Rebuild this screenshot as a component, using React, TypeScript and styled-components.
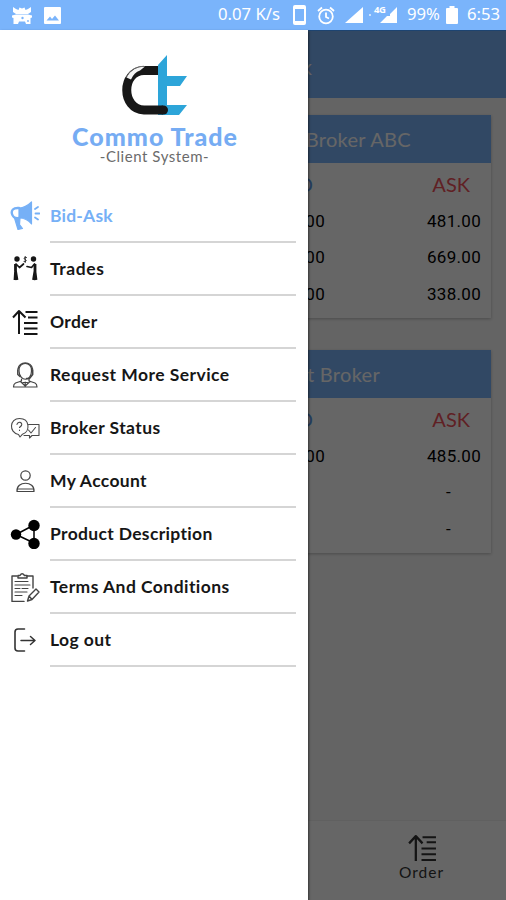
import React from 'react';
import styled, { createGlobalStyle } from 'styled-components';

const Global = createGlobalStyle`
  * { box-sizing: border-box; }
  html, body { margin: 0; height: 100%; }
  body { background: #fff; overflow: hidden; }
`;

const Screen = styled.div`
  position: relative;
  width: 506px;
  height: 900px;
  display: flex;
  flex-direction: column;
  overflow: hidden;
  background: #fafafa;
  font-family: Lato, 'Open Sans', sans-serif;
`;

const StatusBar = styled.header`
  height: 30px;
  flex: none;
  display: flex;
  align-items: center;
  padding: 0 6px 0 11px;
  background: #7ab4fb;
  color: #fff;
  font: 400 16.7px/28px 'Noto Sans', sans-serif;
  svg { display: block; flex: none; }
`;

const StatusText = styled.span<{ $left?: number }>`
  white-space: nowrap;
  margin-left: ${(p) => p.$left ?? 0}px;
  padding-bottom: 2px;
`;

const StatusIcon = styled.span<{ $left?: number }>`
  margin-left: ${(p) => p.$left ?? 0}px;
`;

const NetworkType = styled.span`
  width: 15px;
  margin: 0 -10px 10px 3px;
  font-size: 9.5px;
  font-weight: 700;
  line-height: 12px;
  letter-spacing: -0.3px;
`;

const Dot = styled.span`
  width: 2px;
  height: 2px;
  margin-left: 6px;
  background: rgba(255, 255, 255, 0.6);
`;

const Spacer = styled.span`
  flex: 1;
`;

const Body = styled.div`
  position: relative;
  flex: 1;
  display: flex;
  flex-direction: column;
`;

const AppBar = styled.div`
  height: 68px;
  flex: none;
  display: flex;
  align-items: center;
  padding-left: 240px;
  padding-top: 5px;
  background: #7ab4fb;
  color: #fff;
  font-size: 21px;
`;

const Cards = styled.main`
  flex: 1;
  display: flex;
  flex-direction: column;
  gap: 32px;
  padding: 17px 15px 0;
`;

const Card = styled.section`
  height: 203px;
  background: #fff;
  box-shadow: 0 1px 3px rgba(0, 0, 0, 0.25);
`;

const CardTitle = styled.h2<{ $right: number }>`
  margin: 0;
  height: 48px;
  padding-right: ${(p) => p.$right}px;
  letter-spacing: 0.3px;
  background: #7ab4fb;
  color: #fff;
  font-size: 20px;
  font-weight: 400;
  line-height: 48px;
  text-align: right;
`;

const Quotes = styled.div`
  display: grid;
  grid-template-columns: 310px 156px;
  grid-template-rows: 40px;
  grid-auto-rows: 36.3px;
  padding-right: 10px;
  justify-items: end;
  align-items: center;
  font: 400 17px Roboto, sans-serif;
  color: #000;
`;

const Side = styled.span<{ $color: string; $right: number }>`
  color: ${(p) => p.$color};
  font: 400 20px Lato, sans-serif;
  padding: 1px ${(p) => p.$right}px 0 0;
`;

const Price = styled.span<{ $empty?: boolean }>`
  padding-right: ${(p) => (p.$empty ? 30 : 0)}px;
  letter-spacing: 0.3px;
`;

const BottomNav = styled.nav`
  height: 80px;
  flex: none;
  display: flex;
  justify-content: flex-end;
  background: #fff;
  border-top: 1px solid #f0f0f0;
`;

const NavItem = styled.div`
  width: 169px;
  padding-top: 11px;
  display: flex;
  flex-direction: column;
  align-items: center;
  color: #333;
  font-size: 15.5px;
  letter-spacing: 1px;
  line-height: 18px;
  svg { display: block; }
`;

const Scrim = styled.div`
  position: absolute;
  inset: 0;
  background: rgba(0, 0, 0, 0.6);
  border-top: 1px solid #1d4471;
`;

const Drawer = styled.aside`
  position: absolute;
  inset: 0 auto 0 0;
  width: 308px;
  background: #fff;
  display: flex;
  flex-direction: column;
  box-shadow: 1px 1px 2px rgba(0, 0, 0, 0.5);
`;

const Brand = styled.div`
  height: 160px;
  padding: 24px 0 0 1px;
  display: flex;
  flex-direction: column;
  align-items: center;
  svg { display: block; margin-right: 1px; }
`;

const BrandName = styled.div`
  margin-top: 8px;
  padding-left: 1px;
  height: 25px;
  color: #76acf3;
  font-size: 25px;
  font-weight: 900;
  line-height: 25px;
  letter-spacing: 1px;
`;

const BrandSub = styled.div`
  color: #6b6b6b;
  font-size: 15px;
  line-height: 15px;
  letter-spacing: 0.55px;
`;

const MenuItem = styled.div<{ $active?: boolean }>`
  height: 53px;
  flex: none;
  display: flex;
  padding: 0 12px 0 10px;
  color: ${(p) => (p.$active ? '#76b0f6' : '#161616')};
`;

const MenuIcon = styled.span`
  width: 40px;
  display: flex;
  align-items: center;
  svg { display: block; margin-bottom: 1px; }
`;

const MenuLabel = styled.span<{ $tracking: number }>`
  flex: 1;
  border-bottom: 2px solid #d5d5d5;
  font-size: 17.5px;
  font-weight: 700;
  line-height: 51px;
  letter-spacing: ${(p) => p.$tracking}px;
  white-space: nowrap;
`;

const Ico = ({ children, w = 30 }: { children: React.ReactNode; w?: number }) => (
  <svg width={w} height={w} viewBox="0 0 30 30" fill="none" stroke="currentColor" strokeWidth="1.2" strokeLinecap="round" strokeLinejoin="round">
    {children}
  </svg>
);

const Megaphone = () => (
  <Ico>
    <path d="M9 7C14 7 17.500 5 21.500 1V23C18 18.500 14 17 9 17Z" fill="currentColor" />
    <path d="M9 7C3 6.500 1 9.500 2 13C3 16.500 6 17.500 9 17" strokeWidth="2.400" />
    <path d="M4.500 17L8 28.500L12.500 27.500L9.500 23.500L10 17Z" fill="currentColor" />
    <path d="M25 8L28 6M25.500 12.500H29.500M25 16.500L28 18.500" strokeWidth="1.800" />
  </Ico>
);

const Traders = () => (
  <Ico>
    <g fill="currentColor" stroke="none">
      <circle cx="7" cy="5" r="2.700" />
      <circle cx="23.500" cy="5" r="2.700" />
    </g>
    <path d="M5.500 10V17L7 26M5.500 18L5 26M25 10V17L23.500 26M25 18L26 26" strokeWidth="2.800" strokeLinecap="butt" />
    <path d="M6 10L9.500 13.500L13.500 10M24.500 10L21.500 13.500L17 12.500" strokeWidth="1.700" />
    <path d="M16.500 3.500C14 2.500 13.500 5 15 5.500C17 6 16.500 8 14 7.500M15.200 2.500V8.500" strokeWidth="0.900" />
  </Ico>
);

const OrderIcon = () => (
  <Ico>
    <path d="M9 27V4M3 10.500L9 4L15.500 10.500" strokeWidth="2" strokeLinecap="butt" />
    <path d="M15.500 5H27.500M18 10.500H27.500M14 16H27.500M14 21.500H27.500M14 27H27.500" strokeWidth="2" strokeLinecap="butt" />
  </Ico>
);

const Support = () => (
  <Ico>
    <g stroke="#444">
      <path d="M9 11C8 1 22.500 1 21.500 11C21.500 22 9.500 22 9 11Z" />
      <path d="M7.800 10V14.500L10 16.500M22.700 10V14.500L19.500 18.500H16.500M8 9C9 1 21.500 1 22.500 9" strokeWidth="1.500" />
      <path d="M11.500 19V21L5.500 23Q3.500 24 3.500 27H27Q27 24 25 23L19 21V19M10.500 21.500L15.200 26L20 21.500M13 22.500H17.500M15.200 22V26" />
    </g>
  </Ico>
);

const ChatCheck = () => (
  <Ico>
    <g stroke="#4a4a4a" strokeWidth="1.100">
      <path d="M8.500 21.500C-1.500 19.500 -0.500 5.500 9.500 5.500C20 5.500 20.500 18.500 12.500 21.200L10 24Z" />
      <path d="M7 11.500C7.500 8 13 9 11.500 12.500L9.500 14.500M9.500 17V17.500" />
      <path d="M18.500 11.500H29V22.500H22L19.500 25V22.500H14M18.500 17L21 20L25.500 14.500" />
    </g>
  </Ico>
);

const Person = () => (
  <Ico>
    <g stroke="#444">
      <circle cx="15.500" cy="9.500" r="4.700" />
      <path d="M7 25.500C6 14.500 25 14.500 24 25.500ZM7.200 23H23.600" />
    </g>
  </Ico>
);

const Share = () => (
  <Ico>
    <path d="M6 15.500L24 6V24Z" stroke="#000" strokeWidth="1.500" />
    <g fill="#000" stroke="none">
      <circle cx="6" cy="15.500" r="5.200" />
      <circle cx="24" cy="6.500" r="5.700" />
      <circle cx="24" cy="24.500" r="5.700" />
    </g>
  </Ico>
);

const Clipboard = () => (
  <Ico>
    <g stroke="#444">
      <path d="M7 4H2V29.500H14M17 4H23V16" strokeWidth="1.400" />
      <path d="M8 3.500H10Q12 0 14.500 3.500H17V6H8Z" strokeWidth="1.500" />
      <path d="M5 9.500H18M5 13H20M5 16.500H10M12 16.500H18M5 20H17M5 23.500H12" strokeWidth="1.100" />
      <path d="M17.500 29L19 24L26 17L29 20L22 27.500ZM19 24L22 27.500" strokeWidth="1.400" />
    </g>
  </Ico>
);

const Logout = () => (
  <Ico>
    <path d="M14.500 4H8Q5 4 5 7V23Q5 26 8 26H14.500" stroke="#333" strokeWidth="1.600" />
    <path d="M11 15.500H25M20.500 11.500L25 15.500L20.500 19.500" stroke="#333" strokeWidth="1.500" />
  </Ico>
);

const Logo = () => (
  <svg width="68" height="62" viewBox="0 0 68 62">
    <path d="M38 11L47 1V22H67L60 32H47V51H67L59 61H38Z" fill="#2da5d9" />
    <path d="M38 16.500H24C1 17 1 55 24 56H43" fill="none" stroke="#171717" strokeWidth="9" />
    <circle cx="43.500" cy="56" r="4.500" fill="#171717" />
    <path d="M6.500 23.500Q12 12.500 25 12.500L20 16.500Q14 18.500 11 25.500Z" fill="#f4f4f4" />
    <path d="M6.500 23Q12 12.300 24 12.200" fill="none" stroke="#777" strokeWidth="0.800" />
  </svg>
);

const menu = [
  { label: 'Bid-Ask', Icon: Megaphone, tracking: 0.2 },
  { label: 'Trades', Icon: Traders, tracking: 0.6 },
  { label: 'Order', Icon: OrderIcon, tracking: 0.3 },
  { label: 'Request More Service', Icon: Support, tracking: 0.45 },
  { label: 'Broker Status', Icon: ChatCheck, tracking: 0.45 },
  { label: 'My Account', Icon: Person, tracking: 0.35 },
  { label: 'Product Description', Icon: Share, tracking: 0.33 },
  { label: 'Terms And Conditions', Icon: Clipboard, tracking: 0.45 },
  { label: 'Log out', Icon: Logout, tracking: 0.4 },
];

const brokers = [
  { title: 'Broker ABC', right: 80, rows: [['00', '481.00'], ['00', '669.00'], ['00', '338.00']] },
  { title: 't Broker', right: 111, rows: [['00', '485.00'], ['', '-'], ['', '-']] },
];

export default function App() {
  return (
    <Screen>
      <Global />
      <StatusBar>
        <svg width="22" height="20" viewBox="0 0 22 20" fill="#fff">
          <path d="M2 2L5 4L7.500 5L8.500 2.500L11 3.500L13.500 2.500L14.500 5L17 4L20 2V7L17 9H5L2 7Z" />
          <path d="M1 10.500L5 9.500H17L21 10.500V12.500L19.500 13V19H15L14 16.500H8L7 19H2.500V13L1 12.500Z" />
          <circle cx="11.500" cy="13" r="1.200" fill="#7ab4fb" />
          <circle cx="17" cy="16" r="0.900" fill="#7ab4fb" />
        </svg>
        <StatusIcon $left={11}>
          <svg width="17" height="17" viewBox="0 0 17 17">
            <rect width="17" height="17" rx="1" fill="#fff" />
            <path d="M2.500 13.500L6 9.500L8 12L11 8.500L15 13.500Z" fill="#7ab4fb" />
          </svg>
        </StatusIcon>
        <Spacer />
        <StatusText>0.07 K/s</StatusText>
        <StatusIcon $left={13}>
          <svg width="13" height="20" viewBox="0 0 13 20">
            <rect width="13" height="20" rx="2" fill="#fff" />
            <rect x="2" y="4" width="9" height="12" fill="#7ab4fb" />
          </svg>
        </StatusIcon>
        <StatusIcon $left={11}>
          <svg width="18" height="19" viewBox="0 0 18 19" fill="none" stroke="#fff" strokeWidth="1.800">
            <circle cx="9" cy="10.500" r="6.800" />
            <path d="M9 6.500V11L12 12.500M1 5L5 1.500M17 5L13 1.500" />
          </svg>
        </StatusIcon>
        <StatusIcon $left={10}>
          <svg width="18" height="18" viewBox="0 0 18 18"><path d="M18 1V17H0Z" fill="#fff" /></svg>
        </StatusIcon>
        <Dot />
        <NetworkType>4G</NetworkType>
        <StatusIcon>
          <svg width="18" height="18" viewBox="0 0 18 18"><path d="M18 1V17H1L8 10H11V8Z" fill="#fff" /></svg>
        </StatusIcon>
        <StatusText $left={10}>99%</StatusText>
        <StatusIcon $left={6}>
          <svg width="12" height="18" viewBox="0 0 12 18"><path d="M3.500 0H8.500V2H11Q12 2 12 3V17Q12 18 11 18H1Q0 18 0 17V3Q0 2 1 2H3.500Z" fill="#fff" /></svg>
        </StatusIcon>
        <StatusText $left={9}>6:53</StatusText>
      </StatusBar>
      <Body>
        <AppBar>Bid-Ask</AppBar>
        <Cards>
          {brokers.map((b) => (
            <Card key={b.title}>
              <CardTitle $right={b.right}>{b.title}</CardTitle>
              <Quotes>
                <Side $color="#5b9bea" $right={12}>BID</Side>
                <Side $color="#f0505a" $right={11}>ASK</Side>
                {b.rows.map(([bid, ask], i) => (
                  <React.Fragment key={i}>
                    <Price>{bid}</Price>
                    <Price $empty={ask === '-'}>{ask}</Price>
                  </React.Fragment>
                ))}
              </Quotes>
            </Card>
          ))}
        </Cards>
        <BottomNav>
          <NavItem>
            <Ico w={31}>
              <path d="M9.500 28V4M3 11L9.500 4L16 11" strokeWidth="2.200" strokeLinecap="butt" />
              <path d="M16 5H29M20 10H29M15 16H29M15 21.500H29M15 27H29" strokeWidth="1.900" strokeLinecap="butt" />
            </Ico>
            Order
          </NavItem>
        </BottomNav>
        <Scrim />
        <Drawer>
          <Brand>
            <Logo />
            <BrandName>Commo Trade</BrandName>
            <BrandSub>-Client System-</BrandSub>
          </Brand>
          {menu.map(({ label, Icon, tracking }, i) => (
            <MenuItem key={label} $active={i === 0}>
              <MenuIcon><Icon /></MenuIcon>
              <MenuLabel $tracking={tracking}>{label}</MenuLabel>
            </MenuItem>
          ))}
        </Drawer>
      </Body>
    </Screen>
  );
}
